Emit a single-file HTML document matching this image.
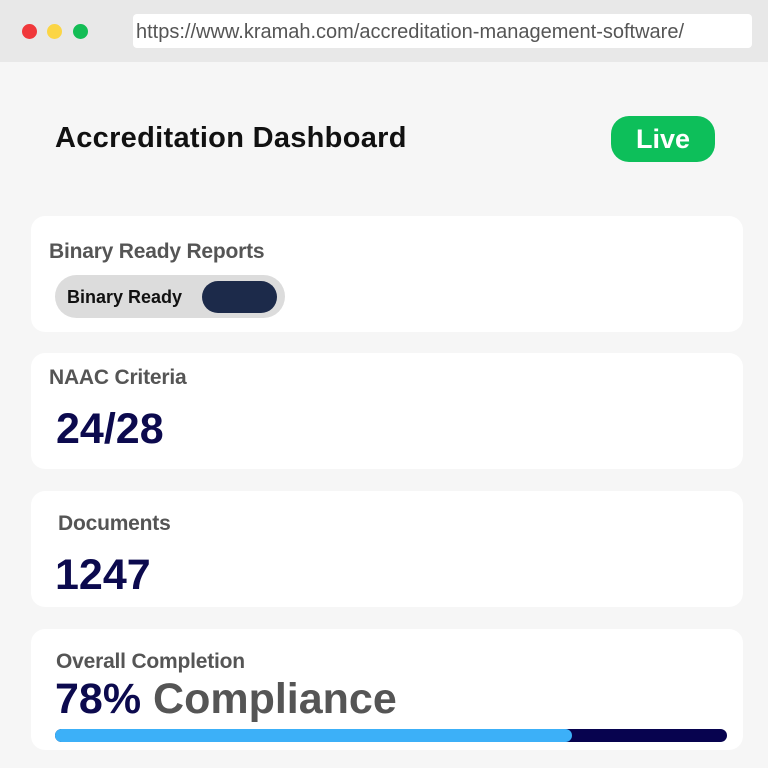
<!DOCTYPE html>
<html><head><meta charset="utf-8"><style>
*{margin:0;padding:0;box-sizing:border-box}
body{width:768px;height:768px;background:#f6f6f6;font-family:"Liberation Sans",sans-serif;position:relative;overflow:hidden}
.abs{position:absolute}
.top{left:0;top:0;width:768px;height:62px;background:#e8e8e8}
.dot{width:15px;height:15px;border-radius:50%;top:24px}
.url{left:133px;top:14px;width:619px;height:34px;background:#fff;border-radius:4px;font-size:20px;color:#555;line-height:36px;padding-left:3px;letter-spacing:0px;white-space:nowrap}
.card{left:31px;width:712px;background:#fff;border-radius:14px}
.lbl{font-size:21px;font-weight:bold;color:#555;letter-spacing:-0.2px;white-space:nowrap}
.big{font-size:43px;font-weight:bold;color:#0c0a4e;white-space:nowrap;letter-spacing:0px}
</style></head><body>
<div class="abs top"></div>
<div class="abs dot" style="left:22px;background:#f0383b"></div>
<div class="abs dot" style="left:47px;background:#fbd545"></div>
<div class="abs dot" style="left:73px;background:#13bd55"></div>
<div class="abs url">https://www.kramah.com/accreditation-management-software/</div>
<div class="abs" style="left:55px;top:122px;font-size:29px;font-weight:bold;color:#111;white-space:nowrap;letter-spacing:0.3px">Accreditation Dashboard</div>
<div class="abs" style="left:611px;top:116px;width:104px;height:46px;background:#0dbf5a;border-radius:18px;color:#fff;font-size:27px;font-weight:bold;text-align:center;line-height:46px">Live</div>

<div class="abs card" style="top:216px;height:116px"></div>
<div class="abs lbl" style="left:49px;top:240px">Binary Ready Reports</div>
<div class="abs" style="left:55px;top:275px;width:230px;height:43px;background:#dcdcdc;border-radius:22px"></div>
<div class="abs" style="left:67px;top:287px;font-size:18px;font-weight:bold;color:#111">Binary Ready</div>
<div class="abs" style="left:202px;top:281px;width:75px;height:32px;background:#1c2a4a;border-radius:16px"></div>

<div class="abs card" style="top:353px;height:116px"></div>
<div class="abs lbl" style="left:49px;top:366px">NAAC Criteria</div>
<div class="abs big" style="left:56px;top:405px">24/28</div>

<div class="abs card" style="top:491px;height:116px"></div>
<div class="abs lbl" style="left:58px;top:512px">Documents</div>
<div class="abs big" style="left:55px;top:551px">1247</div>

<div class="abs card" style="top:629px;height:121px"></div>
<div class="abs lbl" style="left:56px;top:650px">Overall Completion</div>
<div class="abs big" style="left:55px;top:675px">78% <span style="color:#555">Compliance</span></div>
<div class="abs" style="left:55px;top:729px;width:672px;height:13px;background:#07034f;border-radius:7px"></div>
<div class="abs" style="left:55px;top:729px;width:517px;height:13px;background:#3cb0f8;border-radius:7px"></div>
</body></html>
